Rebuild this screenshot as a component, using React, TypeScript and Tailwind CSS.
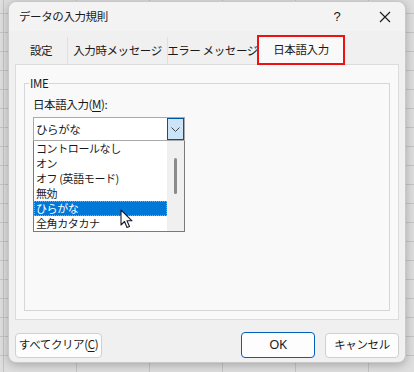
import React from "react";

const font = { fontFamily: '"Noto Sans CJK JP", "Noto Sans", sans-serif' };

function Cursor() {
  return (
    <svg width="14" height="20" viewBox="0 0 14 20" className="absolute left-[111px] top-[207px]">
      <path d="M1 1 L1 16 L4.5 12.5 L7 18.5 L9.5 17.5 L7 11.8 L12 11.8 Z" fill="#fff" stroke="#1a1a2e" strokeWidth="1.1" strokeLinejoin="round" />
    </svg>
  );
}

export default function App() {
  const items = ["コントロールなし", "オン", "オフ (英語モード)", "無効", "ひらがな", "全角カタカナ"];
  return (
    <div
      className="w-[414px] h-[372px] overflow-hidden bg-[#dedede] pl-[8px] pt-[1px] bg-[linear-gradient(#c4c4c4_1px,transparent_1px),linear-gradient(90deg,#c4c4c4_1px,transparent_1px)] bg-[size:73px_19px] bg-[position:3px_13px]"
      style={font}
    >
      <div className="relative w-[398px] h-[362px] rounded-[8px] bg-[#f0f0f0] border border-[#c8c8c8] shadow-[0_2px_10px_rgba(0,0,0,0.25)] flex flex-col text-[11.5px] tracking-[-0.4px] text-[#1a1a1a] whitespace-nowrap">
        {/* title bar */}
        <div className="h-[29px] flex items-center pl-[10px] rounded-t-[8px] bg-[#f3f3f3]">
          <span className="leading-none mt-[1px]">データの入力規則</span>
          <span className="ml-auto w-[20px] text-center text-[13px] mr-[32px]" style={{ fontFamily: '"Liberation Sans", sans-serif' }}>?</span>
          <svg width="12" height="12" viewBox="0 0 12 12" className="mr-[14px]">
            <path d="M1 1 L11 11 M11 1 L1 11" stroke="#1a1a1a" strokeWidth="1.1" />
          </svg>
        </div>
        {/* tabs */}
        <div className="pl-[6px] pt-[5px] flex items-end h-[33px]">
          <div className="w-[53px] h-[27px] flex items-center justify-center border-r border-[#e0e0e0]">設定</div>
          <div className="w-[100px] h-[27px] flex items-center justify-center border-r border-[#e0e0e0]">入力時メッセージ</div>
          <div className="w-[89px] h-[27px] flex items-center justify-center">エラー メッセージ</div>
          <div className="w-[88px] h-[30px] flex items-center justify-center bg-[#f9f9f9] border-2 border-[#ee1111] -mb-[1px] relative z-10">日本語入力</div>
        </div>
        {/* panel */}
        <div className="ml-[6px] w-[384px] h-[256px] bg-[#f9f9f9] border border-[#dcdcdc] pt-[18px] px-[8px]">
          <div className="relative h-[228px] border border-[#d6d6d6] pl-[8px] pt-[12px]">
            <span className="absolute -top-[9px] left-[4px] px-[1px] bg-[#f9f9f9] leading-[16px]">IME</span>
            <div className="leading-[16px]">
              日本語入力(<span className="underline underline-offset-2">M</span>):
            </div>
            <div className="relative mt-[5px] w-[152px]">
              <div className="h-[24px] border border-[#a9a9a9] bg-white flex items-center pl-[2px]">
                <span className="leading-[16px]">ひらがな</span>
                <div className="ml-auto w-[17px] h-[22px] bg-[#cce4f7] border border-[#005499] flex items-center justify-center">
                  <svg width="9" height="5" viewBox="0 0 9 5">
                    <path d="M0.5 0.5 L4.5 4.5 L8.5 0.5" stroke="#444" fill="none" strokeWidth="1" />
                  </svg>
                </div>
              </div>
              <div className="h-[91px] border border-[#7a7a7a] border-t-0 bg-white flex overflow-hidden">
                <div className="flex-1 flex flex-col">
                  {items.map((it, i) => (
                    <div
                      key={it}
                      className={
                        i === 4
                          ? "h-[15px] leading-[15px] text-[11px] pl-[2px] bg-[#0078d7] text-white outline-1 outline-dotted outline-[#e69b2f] -outline-offset-1 overflow-hidden"
                          : "h-[15px] leading-[15px] text-[11px] pl-[2px] overflow-hidden"
                      }
                    >
                      {it}
                    </div>
                  ))}
                </div>
                <div className="w-[17px] bg-[#f0f0f0] flex justify-center pt-[17px]">
                  <div className="w-[3px] h-[36px] bg-[#8a8a8a] rounded-full" />
                </div>
              </div>
            </div>
          </div>
        </div>
        {/* buttons */}
        <div className="flex items-center px-[6px] mt-[12px]">
          <div className="w-[87px] h-[25px] flex items-center justify-center bg-[#fdfdfd] border border-[#d0d0d0] rounded-[4px]">
            すべてクリア(<span className="underline underline-offset-2">C</span>)
          </div>
          <div className="ml-auto w-[74px] h-[26px] flex items-center justify-center bg-[#fdfdfd] border-[1.5px] border-[#005fb8] rounded-[4px]" style={{ fontFamily: '"Noto Sans", sans-serif', fontSize: 13 }}>
            OK
          </div>
          <div className="ml-[10px] w-[74px] h-[25px] flex items-center justify-center bg-[#fdfdfd] border border-[#d0d0d0] rounded-[4px]">
            キャンセル
          </div>
        </div>
        <Cursor />
      </div>
    </div>
  );
}
